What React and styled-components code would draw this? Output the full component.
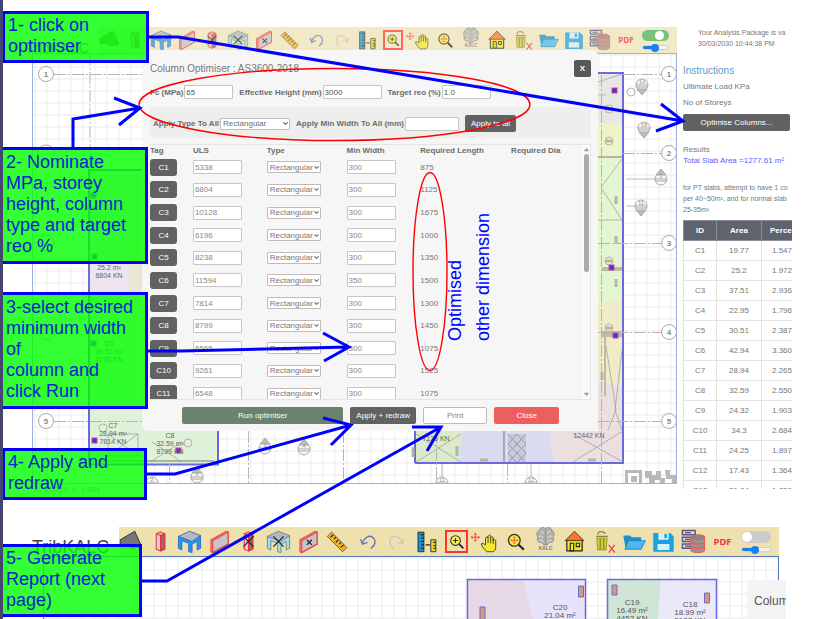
import React from 'react';
import styled, { createGlobalStyle } from 'styled-components';
import { ChevronDown } from 'lucide-react';

const theme = {
  note: '#0000ff',
  mark: '#ff0000',
  dark: '#626262',
  text: '#777777',
  line: '#e4e4e4',
  edge: '#6a6ade',
};

const GlobalStyle = createGlobalStyle`
  * {
    box-sizing: border-box;
  }

  body {
    margin: 0;
    background: white;
    color: ${theme.text};
    font-family: 'Liberation Sans', Arial, sans-serif;
    font-size: 8px;
    line-height: 11px;
  }

  button,
  input,
  select {
    margin: 0;
    font-family: inherit;
    font-size: inherit;
    color: inherit;
  }
`;

const Page = styled.main`
  position: relative;
  display: flex;
  flex-direction: column;
  min-height: 100vh;
  padding-top: 27px;
  border-left: 3px solid #454573;
  overflow: hidden;
`;

const Screen = styled.section`
  display: flex;
  margin-bottom: 25px;
  padding: 0 21px 0 22px;
`;

const NextScreen = styled.section`
  flex: 1;
  display: flex;
  flex-direction: column;
  padding: 0 34px 0 29px;
`;

const Stage = styled.div`
  flex: 1;
  min-width: 0;
`;

const Header = styled.header`
  display: flex;
  height: ${props => (props.$large ? 29 : 26)}px;
`;

const Brand = styled.h1`
  width: ${props => (props.$large ? 87 : 74)}px;
  margin: 0;
  padding-top: ${props => (props.$large ? 11 : 12)}px;
  font-size: ${props => (props.$large ? 18 : 15)}px;
  line-height: 18px;
  font-weight: 400;
  color: ${props => (props.$large ? '#444444' : theme.text)};
`;

const Tools = styled.div`
  flex: 1;
  display: flex;
  align-items: center;
  justify-content: space-between;
  padding-right: 8px;
  background: ${props => (props.$large ? '#eee1ad' : '#f2e9c6')};
`;

const Tool = styled.button`
  width: ${props => (props.$large ? 23 : 20)}px;
  height: ${props => (props.$large ? 23 : 20)}px;
  padding: 0;
  border: ${props => (props.$active ? '2px solid #ff3333' : '0')};
  background: none;
  opacity: ${props => (props.$large ? 1 : 0.7)};

  svg {
    display: block;
    width: 100%;
    height: 100%;
    overflow: visible;
  }
`;

const Switches = styled.div`
  display: flex;
  flex-direction: column;
  align-items: center;
  width: ${props => (props.$large ? 30 : 27)}px;
  gap: 4px;
`;

const Toggle = styled.input`
  appearance: none;
  display: flex;
  width: 100%;
  height: ${props => (props.$large ? 12 : 11)}px;
  padding: 1px;
  border-radius: 6px;
  background: #cccccc;

  &::before {
    content: '';
    height: 100%;
    aspect-ratio: 1;
    border-radius: 50%;
    background: white;
  }

  &:checked {
    justify-content: flex-end;
    padding-right: 5px;
    background: #79c27d;
  }
`;

const Range = styled.input`
  appearance: none;
  width: 100%;
  height: 5px;
  border: 1px solid #d0d0d0;
  border-radius: 3px;
  background: linear-gradient(90deg, #1680f5 50%, #f2f2f2 50%);

  &::-webkit-slider-thumb {
    appearance: none;
    width: 8px;
    height: 8px;
    border-radius: 50%;
    background: #1680f5;
  }
`;

const Canvas = styled.div`
  position: relative;
  min-height: 60px;
  margin-left: ${props => (props.$large ? 11 : 7)}px;
  padding-bottom: ${props => (props.$large ? 0 : 52)}px;
  border: 1px solid ${props => (props.$large ? '#5577bb' : '#9fb0dc')};
  ${props => props.$large && 'flex: 1; border-width: 1px 1px 0;'}
`;

const Drawing = styled.svg`
  position: absolute;
  inset: 0;
  width: 100%;
  height: 100%;
  font-size: 7px;
  text-anchor: middle;
  fill: #666666;
`;

const Coordinates = styled.p`
  height: 18px;
  margin: 0;
  padding: 0 0 0 9px;
  color: #999999;
`;

const Dialog = styled.section`
  position: relative;
  margin: -4px 78px 0 109px;
  padding: 10px 7px 7px 8px;
  border-radius: 6px;
  background: #f6f6f6;
`;

const DialogTitle = styled.div`
  display: flex;
  justify-content: space-between;
  align-items: center;
  height: 17px;

  h2 {
    margin: 0;
    font-size: 10px;
    font-weight: 400;
  }
`;

const Button = styled.button`
  height: 17px;
  padding: 0 5px;
  border: 1px solid ${props => props.$border || 'transparent'};
  border-radius: 2px;
  background: ${props => props.$background || theme.dark};
  color: ${props => props.$color || 'white'};
  line-height: 11px;
  white-space: nowrap;
`;

const Fields = styled.div`
  display: flex;
  align-items: center;
  gap: 6px;
  height: 30px;
`;

const ApplyPanel = styled.div`
  display: flex;
  align-items: center;
  gap: 6px;
  height: 31px;
  margin-bottom: 6px;
  padding: 2px 3px 0;
  border-radius: 3px;
  background: #eeeeee;
`;

const Field = styled.label`
  display: flex;
  align-items: center;
  gap: 1px;
  font-weight: 700;
  white-space: nowrap;
  color: #6c6c6c;
`;

const TextBox = styled.input`
  width: ${props => props.$width || 49}px;
  height: 14px;
  padding: 0 1px;
  border: 1px solid #c6c6c6;
  border-radius: 1px;
  background: white;
  color: ${props => (props.$strong ? '#555555' : '#888888')};
`;

const Picker = styled.span`
  display: inline-grid;
  align-items: center;
  width: ${props => props.$width || 54}px;

  > * {
    grid-area: 1 / 1;
  }

  select {
    appearance: none;
    width: 100%;
    height: 12px;
    padding: 0 2px;
    border: 1px solid #bdbdbd;
    border-radius: 1px;
    background: white;
  }

  svg {
    justify-self: end;
    margin-right: 1px;
    pointer-events: none;
  }
`;

const ScrollBox = styled.div`
  display: flex;
  height: 256px;
  border: 1px solid ${theme.line};
  border-width: 1px 1px 1px 0;
  overflow: hidden;
`;

const ColumnTable = styled.table`
  flex: 1;
  height: 260px;
  table-layout: fixed;
  border-collapse: collapse;

  th,
  td {
    padding: 0;
    text-align: left;
    vertical-align: middle;
    white-space: nowrap;
  }

  th {
    height: 11px;
    color: #6c6c6c;
  }

  td > * {
    display: block;
  }

  td > span {
    display: grid;
  }
`;

const Tag = styled(Button)`
  width: 27px;
  padding: 0;
  border-radius: 3px;
`;

const ScrollBar = styled.div`
  display: flex;
  flex-direction: column;
  align-items: center;
  width: 8px;
  padding: 2px 0;
  background: #fafafa;

  span {
    width: 5px;
    height: 118px;
    margin: 2px 0 auto;
    border-radius: 3px;
    background: #ababab;
  }

  svg {
    width: 5px;
    height: 5px;
    fill: #999999;
  }
`;

const Actions = styled.div`
  display: grid;
  grid-template-columns: 5fr 2fr 2fr 2fr;
  gap: 7px;
  margin: 7px 32px 0;
`;

const Sidebar = styled.aside`
  width: 115px;
  max-height: 462px;
  padding-left: 6px;
  overflow: hidden;
  white-space: nowrap;

  p {
    margin: 0;
  }
`;

const Licence = styled.p`
  padding-left: 15px;
  font-size: 7px;
`;

const Instructions = styled.div`
  display: flex;
  flex-direction: column;
  gap: 5px;
  margin: 16px 2px 13px 0;

  h2 {
    margin: 0;
    font-size: 10px;
    font-weight: 400;
    color: #5a9bd0;
  }

  button {
    margin-top: 1px;
  }
`;

const SlabArea = styled.p`
  color: #5c5cff;
`;

const Hint = styled.div`
  padding-top: 16px;
  font-size: 7px;
`;

const ResultTable = styled.table`
  width: 125px;
  margin-top: 5px;
  table-layout: fixed;
  border-collapse: collapse;

  th,
  td {
    height: 20px;
    padding: 0;
    border: 1px solid ${theme.line};
    text-align: center;
  }

  th {
    border-color: #8b8e97;
    background: #5f636e;
    color: white;
  }

  th:last-child,
  td:last-child {
    padding-left: 8px;
    text-align: left;
  }

  td:last-child {
    padding-left: 10px;
  }
`;

const NextDialog = styled.section`
  position: absolute;
  top: 23px;
  bottom: 0;
  right: -8px;
  width: 39px;
  padding: 14px 0 0 7px;
  overflow: hidden;
  background: #f4f4f4;
  color: #555555;
  font-size: 12px;
  line-height: 14px;
`;

const Note = styled.p`
  position: absolute;
  left: ${props => props.$left}px;
  top: ${props => props.$top}px;
  width: ${props => props.$width}px;
  margin: 0;
  padding: 1px 0 3px 3px;
  border: 3px solid ${theme.note};
  background: rgba(0, 255, 0, 0.8);
  color: #0a1ed2;
  font-size: 18px;
  line-height: 21px;
  white-space: pre;
`;

const TallNote = styled(Note)`
  padding: 2px 0 4px 3px;
`;

const SideNote = styled.p`
  position: absolute;
  left: 438px;
  top: 206px;
  height: 135px;
  margin: 0;
  color: ${theme.note};
  font-size: 18px;
  line-height: 28px;
  white-space: pre;
  writing-mode: vertical-rl;
  transform: rotate(180deg);
`;

const Arrows = styled.svg`
  position: absolute;
  left: -3px;
  top: 0;
  width: 813px;
  height: 619px;
  fill: none;
  pointer-events: none;
`;

const Frame = ({ children }) => <svg viewBox="-1.5 -1.5 27 27">{children}</svg>;

const Cross = ({ x = 12, y = 12, size = 4 }) => (
  <path
    d={`M${x - size} ${y - size}l${size * 2} ${size * 2}m0 ${-size * 2}l${-size * 2} ${size * 2}`}
    stroke="#222"
    strokeWidth="1.5"
    fill="none"
  />
);

const ColumnShape = () => (
  <g stroke="#ee2f35" strokeWidth="1.2">
    <path d="M7 3l5-2 5 2v18l-5 2-5-2z" fill="#d9d0d0" />
    <path d="M12 5l5-2v18l-5 2z" fill="#777" />
    <path d="M7 3l5 2 5-2" fill="none" />
  </g>
);

const TableShape = ({ pale }) => (
  <g stroke={pale ? '#65828c' : '#315ed0'} strokeWidth="1">
    <path d="M-1 6v14l4 2V11l8 3v10l4 1V15l6-3v10l4-2V5L14 11z" fill={pale ? '#a8dce8' : '#159bf0'} />
    <path d="M-1 6L12 0l13 5-10 7z" fill="#b5b9bd" />
  </g>
);

const WallShape = () => (
  <g stroke="#f03c43" strokeWidth="1.3">
    <path d="M2 10L20 0l2 1v14L4 25l-2-1z" fill="#f0a0a0" />
    <path d="M4 11L22 1v14L4 25z" fill="#c7c4c8" />
  </g>
);

const Lens = ({ children }) => (
  <g transform="translate(2 2) scale(0.86)">
    <path d="M16 16l7 7" stroke="#222" strokeWidth="3" />
    <circle cx="10" cy="10" r="8" fill="#f8f044" stroke="#333" strokeWidth="1.8" />
    {children}
  </g>
);

const Mover = ({ x, y, size = 5 }) => (
  <g transform={`translate(${x} ${y}) scale(${size / 5})`} stroke="#f1453c" strokeWidth="1.4" fill="none">
    <path d="M-6 0H6M0-6V6M-4-2l-2 2 2 2M4-2l2 2-2 2M-2-4l2-2 2 2M-2 4l2 2 2-2" />
  </g>
);

const tools = [
  ['Slab', <Frame><path d="M0 10L17 0l8 18-12 2-4-4-9 1z" fill="#777" stroke="#222" /></Frame>],
  ['Column', <Frame><ColumnShape /></Frame>],
  ['Table', <Frame><TableShape /></Frame>],
  ['Wall', <Frame><WallShape /></Frame>],
  ['Delete column', <Frame><ColumnShape /><Cross size={6} /></Frame>],
  ['Delete table', <Frame><TableShape pale /><Cross size={6} /></Frame>],
  ['Delete wall', <Frame><WallShape /><Cross x={13} y={13} size={3} /></Frame>],
  ['Measure', (
    <Frame>
      <path d="M5 1l18 18-5 5L0 6z" fill="#f2b51c" stroke="#4e4c80" />
      <path d="M7 4L4 7m6 0L8 9m5 1l-3 3m6 0l-2 2m5 1l-3 3" stroke="#222" strokeWidth="1.3" />
    </Frame>
  )],
  ['Undo', (
    <Frame>
      <path d="M4 9l2 6 6-2M6 15C7 8 14 4 18 7c4 3 4 9-2 13" fill="none" stroke="#6671c4" strokeWidth="1.6" />
    </Frame>
  )],
  ['Redo', (
    <Frame>
      <path d="M21 9l-2 6-6-2M19 15C18 8 11 4 7 7c-4 3-4 9 2 13" fill="none" stroke="#c9c9bd" strokeWidth="1.6" />
    </Frame>
  )],
  ['Scale', (
    <Frame>
      <path d="M2 1h7v23H2z" fill="#1c95cc" stroke="#223" />
      <path d="M17 10h6v14h-6z" fill="#ecd72f" stroke="#223" />
      <path d="M5 4h4M6 8h3M5 12h4M6 16h3M5 20h4M20 13h3M20 17h3M20 20h3M11 16h5" stroke="#222" strokeWidth="1.3" />
    </Frame>
  )],
  ['Zoom in', <Frame><Lens><path d="M6 10h8M10 6v8" stroke="#222" strokeWidth="1.6" /></Lens></Frame>],
  ['Pan', (
    <Frame>
      <Mover x={0} y={7} size={4} />
      <path
        d="M14 24c-3-2-6-6-7-9 1-2 3 0 5 1V8c1-2 3-2 3 0V6c1-2 3-2 3 0v2c1-2 3-2 3 0v3c1-2 3-1 3 0v8c0 3-2 5-3 5z"
        fill="#f6e92c"
        stroke="#333"
      />
      <path d="M15 8v6m3-6v6m3-5v6" stroke="#333" />
    </Frame>
  )],
  ['Zoom extents', <Frame><Lens><Mover x={10} y={10} size={4} /></Lens></Frame>],
  ['Kalc', (
    <Frame>
      <path d="M12-3C9-6 5-4 5-1 2-1 1 4 3 7c-2 4 1 7 4 6l3 3h4l3-3c3 1 6-2 4-6 2-3 1-8-2-8 0-3-4-5-7-2z" fill="#b0b0b0" stroke="#888" />
      <path
        d="M12-3v18M6 0c2 0 4 1 3 3M4 6c3-1 5 0 5 2m-4 3c3-1 4 0 4 2M18 0c-2 0-4 1-3 3m5 3c-3-1-5 0-5 2m4 3c-3-1-4 0-4 2"
        fill="none"
        stroke="#eee"
      />
      <path d="M12-3v18" stroke="#888" />
      <text x="12" y="22" textAnchor="middle" fontSize="6" fontWeight="700" fill="#7775a5">KALC</text>
    </Frame>
  )],
  ['Home', (
    <Frame>
      <path d="M3 10h18v13H3z" fill="#f6e72c" stroke="#222" strokeWidth="1.4" />
      <path d="M1 11L12 0l11 11z" fill="#fa762c" stroke="#333" />
      <path d="M7 14h4v9H7zM14 14h4v4h-4z" fill="#f6e72c" stroke="#222" strokeWidth="1.3" />
    </Frame>
  )],
  ['Clear', (
    <Frame>
      <path d="M3 8h12l-1 14H4z" fill="#d9cc24" stroke="#8d8850" />
      <path d="M2 6h14M4 4c1-5 7-4 9-1M7 9v12m4-12v12" fill="none" stroke="#858447" strokeWidth="1.5" />
      <path d="M17 16l7 9m0-9l-7 9" stroke="#e84845" strokeWidth="1.6" />
    </Frame>
  )],
  ['Open', (
    <Frame>
      <path d="M0 5h8l2 2h11v14H3z" fill="#1b8fd0" />
      <path d="M6 11h20l-5 10H2z" fill="#4db6ed" stroke="#1585c5" />
    </Frame>
  )],
  ['Save', (
    <Frame>
      <path d="M0 2h20l4 4v18H0z" fill="#16a2e5" />
      <path d="M6 2h12v8H6zM5 15h14v7H5z" fill="#d8f2fb" />
      <path d="M13 3h3v5h-3z" fill="#16a2e5" />
    </Frame>
  )],
  ['Database', (
    <Frame>
      <path d="M-1-1h15v5H-1zm0 8h15v5H-1zm0 8h13v5H-1z" fill="#ddd" stroke="#5a538e" strokeWidth="1.7" />
      <path d="M2 1.5h7M2 9.5h7M2 17.5h7" stroke="#555" strokeWidth="1.4" />
      <path d="M9 7v15c0 4 16 4 16 0V7z" fill="#9b9292" stroke="#ee5656" strokeWidth="1.2" />
      <ellipse cx="17" cy="7" rx="8" ry="3" fill="#8a8585" stroke="#ee5656" strokeWidth="1.2" />
      <path d="M9 12c0 4 16 4 16 0M9 17c0 4 16 4 16 0" fill="none" stroke="#ee5656" strokeWidth="1.4" />
    </Frame>
  )],
  ['PDF', (
    <Frame>
      <text x="12" y="16" textAnchor="middle" fontSize="11" fontWeight="700" fontFamily="Open Sans, sans-serif" fill="#f52e38">PDF</text>
    </Frame>
  )],
];

const TopBar = ({ large, checked }) => (
  <Header $large={large}>
    <Brand $large={large}>TribKALC</Brand>
    <Tools $large={large}>
      {tools.map(([name, icon]) => (
        <Tool key={name} aria-label={name} $large={large} $active={name === 'Zoom in'}>
          {icon}
        </Tool>
      ))}
      <Switches $large={large}>
        <Toggle type="checkbox" aria-label="Show analysis" $large={large} defaultChecked={checked} />
        <Range type="range" aria-label="Scale" defaultValue="48" />
      </Switches>
    </Tools>
  </Header>
);

const Grid = ({ id }) => (
  <>
    <pattern id={id} width="12" height="12" patternUnits="userSpaceOnUse">
      <path d="M2 0v12M0 1h12" stroke="#ebebeb" fill="none" />
    </pattern>
    <rect width="100%" height="100%" fill={`url(#${id})`} />
  </>
);

const Bubble = ({ x, y, children }) => (
  <g>
    <circle cx={x} cy={y} r="7.5" fill="white" stroke="#aaa" />
    <text x={x} y={y + 3} fontSize="8" fontWeight="700" fill="#888">{children}</text>
  </g>
);

const Marker = ({ x, y, up, children }) => (
  <g stroke="#aaa" fill="#bbb">
    <circle cx={x} cy={y} r="6" fill="#f7f7f7" />
    <path d={up ? `M${x - 5} ${y - 4}l5-6 5 6z` : `M${x - 5} ${y + 4}l5 6 5-6z`} />
    <path d={`M${x - 6} ${y}h12M${x - 6} ${y + 2}h12`} />
    <text x={x} y={y - 1} fontSize="6" stroke="none" fill="#999">{children}</text>
  </g>
);

const Support = ({ x, y }) => (
  <rect x={x - 2} y={y - 2} width="5" height="5" fill="#3535ff" stroke="#dd4477" />
);

const Area = ({ x, y, lines, step = 8, size }) => (
  <text fontSize={size}>
    {lines.map((line, i) => (
      <tspan key={line} x={x} y={y + i * step}>{line}</tspan>
    ))}
  </text>
);

const rightBubbles = [74, 153, 243, 332, 421];

const Plan = () => (
  <Drawing>
    <Grid id="grid" />
    <g transform="translate(-33 -54)">
      <path d="M89 170h70v130H89z" fill="#ece4ee" />
      <path d="M129 240h30v60h-30z" fill="#ebe6d3" />
      <path d="M89 300h129v164H89z" fill="#e7f4d4" />
      <path d="M89 395h40l90 40v30H89z" fill="#dff1d8" />
      <path d="M598 73h25v50h-25z" fill="#e9e7e2" />
      <path d="M598 123h25v34h-25z" fill="#edf4c9" />
      <path d="M598 157h25v145h-25z" fill="#e4f6d1" />
      <path d="M598 302l25-2v87l-25-7z" fill="#efecc9" />
      <path d="M598 380l25 7v76h-68l-6-32h49z" fill="#ecdfe0" />
      <path d="M415 431h47l-3 32h-44z" fill="#dbebc9" />
      <path d="M462 431h87l6 32h-96z" fill="#dadaf0" />
      <path d="M508 434h18v29h-18z" fill="#c9cbd8" />
      <path d="M508 434l9 10 9-10m-18 10l9 9 9-9m-18 9l9 10 9-10m-18-9l9-10 9 10m-18 9l9-9 9 9m-18 10l9-10 9 10" stroke="#9799ad" fill="none" />
      <path d="M89 464V170h55M88 464.5h130V431M415 431v32M415 463h208V73h-25" stroke={theme.edge} strokeWidth="2" fill="none" />
      <path d="M93 461h121M504 431v31M598 157h24" stroke="#777" fill="none" />
      <path d="M416 434l45 28m0-28l-45 28M573 434l50 28m-50 0l50-31M602 186l20-27m-20 30l20 31M598 82l24-8M606 346l10 64-8 20m14-80l-7 60 7 20M108 434h30v22h-30zl30 22m0-22l-30 22M150 462l32-20m-30 0l30 20M598 220h24" stroke="#999" strokeWidth="0.7" fill="none" />
      <path d="M602 331h20v6h-20zM602 267h20v4h-20zM604 336h2v60h-2z" fill="#bdbba0" />
      <path d="M54 74.5h88M54 421.5h88M90 54v116M623 74.5h38M623 153.5h38M598 243.5h63M598 332.5h63M598 421.5h63M601.5 75v409M169.5 464v20M248.5 431v53M343.5 431v53M436.5 431v53M507.5 464v20" stroke="#b5b5b5" strokeDasharray="12 2 2 2" fill="none" />
      <path d="M626 179h29M626 206h10M598 95h8M442 464v13M531 464v13" stroke="#bbb" fill="none" />
      {rightBubbles.map((y, i) => (
        <Bubble key={y} x={669} y={y}>{i + 1}</Bubble>
      ))}
      <Bubble x={46} y={74}>1</Bubble>
      <Bubble x={46} y={421}>5</Bubble>
      <g fill="white" stroke="#aaa">
        <circle cx="46" cy="153" r="8" />
        <circle cx="46" cy="243" r="8" />
        <circle cx="46" cy="332" r="8" />
      </g>
      <Marker x={642} y={85}>14</Marker>
      <Marker x={644} y={128}>18</Marker>
      <Marker x={661} y={179} up>1</Marker>
      <Marker x={641} y={206}>11</Marker>
      <Marker x={197} y={477} up>3</Marker>
      <Marker x={152} y={483}>2</Marker>
      <Marker x={265} y={448} up>3</Marker>
      <Marker x={304} y={449} up>4</Marker>
      <Marker x={442} y={483}>11</Marker>
      <Marker x={531} y={483}>12</Marker>
      <g stroke="#b5b5a8" fill="none">
        <circle cx="609" cy="109" r="4" />
        <circle cx="609" cy="141" r="4" />
        <circle cx="609" cy="261" r="4" />
        <circle cx="609" cy="328" r="4" />
        <circle cx="631" cy="92" r="4" />
        <circle cx="103" cy="428" r="4" />
        <circle cx="188" cy="443" r="4" />
        <path d="M606 109h6M606 141h6M606 261h6M606 328h6M616 196v8M616 236v8M616 279v8M602 372v8M588 460h8M480 460h8M413 447v10M457 446v10" strokeWidth="3" />
      </g>
      <Support x={614} y={90} />
      <Support x={611} y={267} />
      <Support x={615} y={335} />
      <Support x={94} y={440} />
      <Support x={178} y={450} />
      <Support x={93} y={195} />
      <Support x={94} y={256} />
      <Support x={93} y={343} />
      <Area x={109} y={270} lines={['25.2 m²', '6804 KN']} />
      <Area x={109} y={346} lines={['C5', '30.51 m²', '8238 KN']} />
      <Area x={113} y={428} lines={['C7', '28.94 m²', '7814 KN']} />
      <Area x={170} y={438} lines={['C8', '32.59 m²', '8799 KN']} />
      <Area x={436} y={441} lines={['7125 KN']} />
      <Area x={589} y={438} lines={['12442 KN']} />
      <path d="M625 470h17v14h-17zM645 471h7v4h4v-4h5v7h4v6h-5v-4h-5v4h-6v-6h-4zM665 470h5v5h6v9h-4v-5h-6z" fill="#b9b9b9" />
      <path d="M628 473h11v11h-11z" fill="white" />
      <path d="M631 476h6v6h-6z" fill="#b9b9b9" />
    </g>
  </Drawing>
);

const NextPlan = () => (
  <Drawing>
    <Grid id="next-grid" />
    <g transform="translate(-44 -557)" stroke={theme.edge}>
      <path d="M467.5 579.5h56l16 60h-72z" fill="#e6d8e4" stroke="none" />
      <path d="M523 579.5h63v60h-48z" fill="#e6e3fa" stroke="none" />
      <path d="M607.5 579.5h54l-5 60h-49z" fill="#cfe6d6" stroke="none" />
      <path d="M661 579.5h56v60h-61z" fill="#ebe8f7" stroke="none" />
      <path d="M467.5 640v-60.5h118V640M607.5 640v-60.5h109V640" strokeWidth="1.5" fill="none" />
      <path d="M480 607h5v13h-5zM578.5 586h5v11h-5zM612 585h5v10h-5zM704.5 593h5v10h-5z" fill="#d59a72" />
      <g stroke="none" fill="#555">
        <Area x={560} y={610} lines={['C20', '21.04 m²']} size="8" />
        <Area x={632} y={605} lines={['C19', '16.49 m²', '4452 KN']} size="8" />
        <Area x={690} y={607} lines={['C18', '18.99 m²', '5127 KN']} size="8" />
      </g>
    </g>
  </Drawing>
);

const columns = [
  ['C1', 5338, 300, 875],
  ['C2', 6804, 300, 1125],
  ['C3', 10128, 300, 1675],
  ['C4', 6196, 300, 1000],
  ['C5', 8238, 300, 1350],
  ['C6', 11594, 350, 1500],
  ['C7', 7814, 300, 1300],
  ['C8', 8799, 300, 1450],
  ['C9', 6565, 300, 1075],
  ['C10', 9261, 300, 1525],
  ['C11', 6548, 300, 1075],
];

const results = [
  ['C1', '19.77', '1.547'],
  ['C2', '25.2', '1.972'],
  ['C3', '37.51', '2.936'],
  ['C4', '22.95', '1.796'],
  ['C5', '30.51', '2.387'],
  ['C6', '42.94', '3.360'],
  ['C7', '28.94', '2.265'],
  ['C8', '32.59', '2.550'],
  ['C9', '24.32', '1.903'],
  ['C10', '34.3', '2.684'],
  ['C11', '24.25', '1.897'],
  ['C12', '17.43', '1.364'],
  ['C13', '21.84', '1.709'],
];

const TypePicker = ({ width, label }) => (
  <Picker $width={width}>
    <select aria-label={label} defaultValue="Rectangular">
      <option>Rectangular</option>
    </select>
    <ChevronDown size={7} strokeWidth={4} />
  </Picker>
);

const Optimiser = () => (
  <Dialog aria-label="Column Optimiser">
    <DialogTitle>
      <h2>Column Optimiser : AS3600-2018</h2>
      <Button $background="#585858"><b>X</b></Button>
    </DialogTitle>
    <Fields>
      <Field>Fc (MPa) <TextBox $strong defaultValue="65" /></Field>
      <Field>Effective Height (mm) <TextBox $strong $width={59} defaultValue="3000" /></Field>
      <Field>Target reo (%) <TextBox $strong defaultValue="1.0" /></Field>
    </Fields>
    <ApplyPanel>
      <Field>Apply Type To All <TypePicker width={70} label="Apply Type To All" /></Field>
      <Field>Apply Min Width To All (mm) <TextBox $width={54} /></Field>
      <Button>Apply to all</Button>
    </ApplyPanel>
    <ScrollBox>
      <ColumnTable>
        <colgroup>
          <col width="43" />
          <col width="74" />
          <col width="80" />
          <col width="74" />
          <col width="91" />
          <col width="71" />
        </colgroup>
        <thead>
          <tr>
            <th>Tag</th>
            <th>ULS</th>
            <th>Type</th>
            <th>Min Width</th>
            <th>Required Length</th>
            <th>Required Dia</th>
          </tr>
        </thead>
        <tbody>
          {columns.map(([tag, uls, width, length]) => (
            <tr key={tag}>
              <td><Tag>{tag}</Tag></td>
              <td><TextBox aria-label={`${tag} ULS`} defaultValue={uls} /></td>
              <td><TypePicker label={`${tag} type`} /></td>
              <td><TextBox aria-label={`${tag} min width`} defaultValue={width} /></td>
              <td>{length}</td>
              <td />
            </tr>
          ))}
        </tbody>
      </ColumnTable>
      <ScrollBar aria-hidden="true">
        <svg viewBox="0 0 6 6"><path d="M0 5l3-4 3 4z" /></svg>
        <span />
        <svg viewBox="0 0 6 6"><path d="M0 1l3 4 3-4z" /></svg>
      </ScrollBar>
    </ScrollBox>
    <Actions>
      <Button $background="#6b826e">Run optimiser</Button>
      <Button>Apply + redraw</Button>
      <Button $background="white" $border="#bbbbbb" $color="#888888">Print</Button>
      <Button $background="#ed5f5f">Close</Button>
    </Actions>
  </Dialog>
);

const Results = () => (
  <Sidebar>
    <Licence>
      Your Analysis Package is va
      <br />
      30/03/2030 10:44:38 PM
    </Licence>
    <Instructions>
      <h2>Instructions</h2>
      <p>Ultimate Load KPa</p>
      <p>No of Storeys</p>
      <Button>Optimise Columns...</Button>
    </Instructions>
    <p>Results</p>
    <SlabArea>Total Slab Area =1277.61 m²</SlabArea>
    <Hint>
      <p>for PT slabs, attempt to have 1 co</p>
      <p>per 40~50m², and for normal slab</p>
      <p>25-35m²</p>
    </Hint>
    <ResultTable>
      <colgroup>
        <col width="33" />
        <col width="45" />
        <col width="47" />
      </colgroup>
      <thead>
        <tr>
          <th>ID</th>
          <th>Area</th>
          <th>Perce</th>
        </tr>
      </thead>
      <tbody>
        {results.map(row => (
          <tr key={row[0]}>
            {row.map(cell => (
              <td key={cell}>{cell}</td>
            ))}
          </tr>
        ))}
      </tbody>
    </ResultTable>
  </Sidebar>
);

const App = () => (
  <>
    <GlobalStyle />
    <Page>
      <Screen>
        <Stage>
          <TopBar checked />
          <Canvas>
            <Plan />
            <Optimiser />
          </Canvas>
          <Coordinates>X: 11.002, y: 1.351</Coordinates>
        </Stage>
        <Results />
      </Screen>

      <NextScreen>
        <TopBar large />
        <Canvas $large>
          <NextPlan />
          <NextDialog>Colum</NextDialog>
        </Canvas>
      </NextScreen>

      <Note $left={-1} $top={11} $width={147}>{'1- click on\noptimiser'}</Note>
      <TallNote $left={-3} $top={147} $width={148}>{'2- Nominate\nMPa, storey\nheight, column\ntype and target\nreo %'}</TallNote>
      <TallNote $left={-3} $top={292} $width={148}>{'3-select desired\nminimum width\nof\ncolumn and\nclick Run'}</TallNote>
      <Note $left={-1} $top={448} $width={145}>{'4- Apply and\nredraw'}</Note>
      <Note $left={-3} $top={544} $width={142}>{'5- Generate\nReport (next\npage)'}</Note>
      <SideNote>{'Optimised\nother dimension'}</SideNote>

      <Arrows>
        <g stroke={theme.mark} strokeWidth="1.4">
          <ellipse cx="334.5" cy="104.5" rx="195.5" ry="36" />
          <ellipse cx="430" cy="271.5" rx="17" ry="99" />
        </g>
        <g stroke={theme.note} strokeWidth="3">
          <path d="M148 37h30l505 84M661 104l22 17-27 10" />
          <path d="M73 147v-28l67-11M114 98l26 10-21 17" />
          <path d="M145 351h36l168-4M323 333l26 14-25 14" />
          <path d="M146 474h29l176-49M323 418l28 7-20 20" />
          <path d="M139 581h28l274-154M412 427h29l-14 24" />
        </g>
      </Arrows>
    </Page>
  </>
);

export default App;
